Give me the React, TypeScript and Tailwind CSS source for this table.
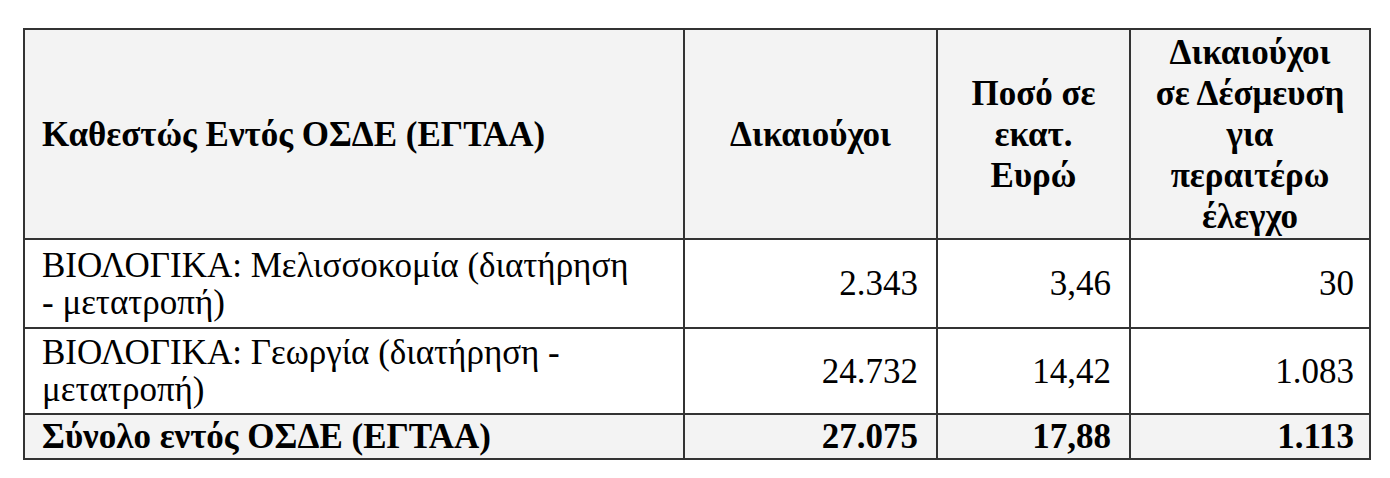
const cell = 'border-2 border-[#333333] align-middle';

export default function App() {
  return (
    <div className="w-[1390px] h-[478px] bg-white pl-[23px] pt-[28px] text-black">
      <table className="table-fixed border-collapse w-[1346px]">
        <colgroup>
          <col className="w-[660px]" />
          <col className="w-[253px]" />
          <col className="w-[193px]" />
          <col className="w-[240px]" />
        </colgroup>
        <thead>
          <tr className="h-[210px] bg-[#f3f3f3] text-[35px] leading-[41px] font-bold font-['Liberation_Serif']">
            <th className={`${cell} text-left px-[17px]`}>Καθεστώς Εντός ΟΣΔΕ (ΕΓΤΑΑ)</th>
            <th className={`${cell} text-center px-2`}>Δικαιούχοι</th>
            <th className={`${cell} text-center px-2`}>
              Ποσό σε<br />εκατ.<br />Ευρώ
            </th>
            <th className={`${cell} text-center px-2`}>
              Δικαιούχοι<br />σε Δέσμευση<br />για<br />περαιτέρω<br />έλεγχο
            </th>
          </tr>
        </thead>
        <tbody className="text-[35px] leading-[37px]">
          <tr className="h-[89px] font-['Liberation_Serif']">
            <td className={`${cell} px-[17px] whitespace-nowrap`}>
              ΒΙΟΛΟΓΙΚΑ: Μελισσοκομία (διατήρηση<br />- μετατροπή)
            </td>
            <td className={`${cell} text-right pr-[18px]`}>2.343</td>
            <td className={`${cell} text-right pr-[18px]`}>3,46</td>
            <td className={`${cell} text-right pr-[15px]`}>30</td>
          </tr>
          <tr className="h-[86px] font-['Liberation_Serif']">
            <td className={`${cell} px-[17px] whitespace-nowrap`}>
              ΒΙΟΛΟΓΙΚΑ: Γεωργία (διατήρηση -<br />μετατροπή)
            </td>
            <td className={`${cell} text-right pr-[18px]`}>24.732</td>
            <td className={`${cell} text-right pr-[18px]`}>14,42</td>
            <td className={`${cell} text-right pr-[15px]`}>1.083</td>
          </tr>
          <tr className="h-[45px] bg-[#f3f3f3] font-bold leading-[40px] font-['Liberation_Serif']">
            <td className={`${cell} px-[17px]`}>Σύνολο εντός ΟΣΔΕ (ΕΓΤΑΑ)</td>
            <td className={`${cell} text-right pr-[18px]`}>27.075</td>
            <td className={`${cell} text-right pr-[18px]`}>17,88</td>
            <td className={`${cell} text-right pr-[15px]`}>1.113</td>
          </tr>
        </tbody>
      </table>
    </div>
  );
}
